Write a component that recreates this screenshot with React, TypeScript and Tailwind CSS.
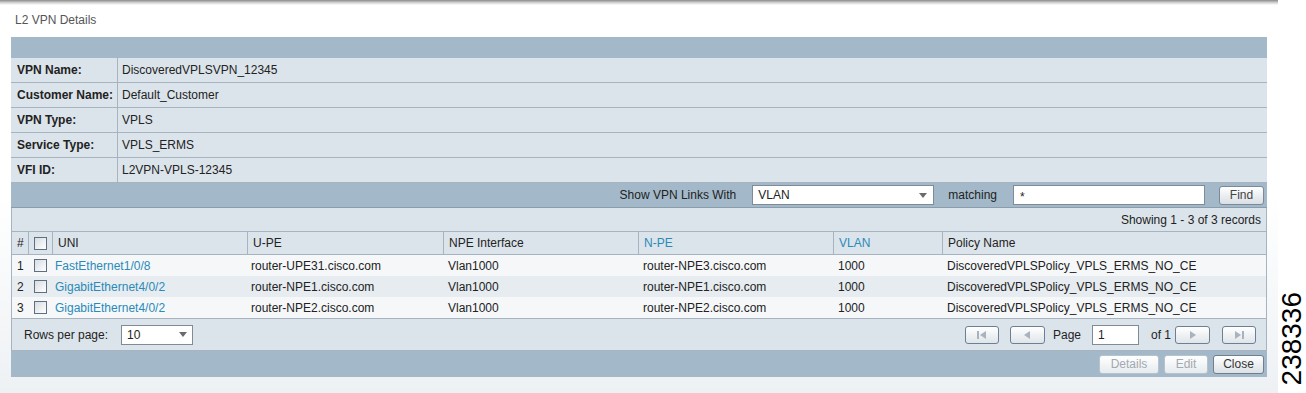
import React from "react";

const detailRows: [string, string][] = [
  ["VPN Name:", "DiscoveredVPLSVPN_12345"],
  ["Customer Name:", "Default_Customer"],
  ["VPN Type:", "VPLS"],
  ["Service Type:", "VPLS_ERMS"],
  ["VFI ID:", "L2VPN-VPLS-12345"],
];

const dataRows = [
  ["1", "FastEthernet1/0/8", "router-UPE31.cisco.com", "Vlan1000", "router-NPE3.cisco.com", "1000", "DiscoveredVPLSPolicy_VPLS_ERMS_NO_CE"],
  ["2", "GigabitEthernet4/0/2", "router-NPE1.cisco.com", "Vlan1000", "router-NPE1.cisco.com", "1000", "DiscoveredVPLSPolicy_VPLS_ERMS_NO_CE"],
  ["3", "GigabitEthernet4/0/2", "router-NPE2.cisco.com", "Vlan1000", "router-NPE2.cisco.com", "1000", "DiscoveredVPLSPolicy_VPLS_ERMS_NO_CE"],
];

function Checkbox() {
  return (
    <span className="inline-block w-[13px] h-[13px] border border-[#5e6f7f] bg-gradient-to-br from-[#d8dde2] to-white" />
  );
}

function Arrow({ dir }: { dir: "left" | "right" }) {
  return (
    <svg width="6" height="8" viewBox="0 0 6 8">
      {dir === "left" ? <polygon points="6,0 0,4 6,8" fill="#a9b3bd" /> : <polygon points="0,0 6,4 0,8" fill="#a9b3bd" />}
    </svg>
  );
}

function PagerBtn({ kind }: { kind: "first" | "prev" | "next" | "last" }) {
  const w = kind === "prev" || kind === "next" ? "w-[35px]" : "w-[34px]";
  return (
    <div className={`${w} h-[18px] rounded-[3px] border border-[#6d7f90] bg-gradient-to-b from-white to-[#dfe5ea] flex items-center justify-center gap-[1px]`}>
      {kind === "first" && <span className="w-[2px] h-[8px] bg-[#a9b3bd]" />}
      {(kind === "first" || kind === "prev") && <Arrow dir="left" />}
      {(kind === "next" || kind === "last") && <Arrow dir="right" />}
      {kind === "last" && <span className="w-[2px] h-[8px] bg-[#a9b3bd]" />}
    </div>
  );
}

function Caret() {
  return (
    <svg width="8" height="5" viewBox="0 0 8 5">
      <polygon points="0,0 8,0 4,5" fill="#6b6b6b" />
    </svg>
  );
}

export default function App() {
  const cell = "px-[5px] flex items-center";
  return (
    <div
      className="w-[1306px] h-[393px] bg-white flex text-[12px] text-[#222] overflow-hidden"
      style={{ fontFamily: '"Liberation Sans", Arial, sans-serif' }}
    >
      <div className="w-[1280px] flex flex-col bg-gradient-to-b from-white via-white to-[#eef1f4]">
        <div className="h-[5px] bg-gradient-to-b from-[#8a8a8a] via-[#cfcfcf] to-white" />
        <div className="h-[32px] pl-[15px] pt-[6px] text-[#555]">L2 VPN Details</div>
        <div className="ml-[11px] w-[1256px] flex flex-col">
          <div className="h-[21px] bg-[#a3b9c9]" />
          {detailRows.map(([k, v]) => (
            <div key={k} className="h-[25px] flex bg-[#dce4eb] border-b border-[#a7b4bf]">
              <div className="w-[107px] pl-[6px] flex items-center font-bold border-r border-[#a7b4bf]">{k}</div>
              <div className="pl-[4px] flex items-center">{v}</div>
            </div>
          ))}
          <div className="h-[25px] bg-[#a3b9c9] flex items-center justify-end pr-[3px] border-b border-[#8a9dab]">
            <span className="mr-[16px]">Show VPN Links With</span>
            <div className="w-[182px] h-[20px] bg-white border border-[#7f8c97] flex items-center justify-between pl-[5px] pr-[6px]">
              <span>VLAN</span>
              <Caret />
            </div>
            <span className="ml-[14px] mr-[16px]">matching</span>
            <div className="w-[192px] h-[20px] bg-white border border-[#7f8c97] pl-[6px] flex items-start pt-[2px]">*</div>
            <div className="ml-[14px] w-[45px] h-[19px] rounded-[3px] border border-[#7a8a98] bg-gradient-to-b from-white to-[#d9dfe4] flex items-center justify-center text-[#444]">
              Find
            </div>
          </div>
          <div className="h-[23px] bg-[#dce4eb] flex items-center justify-end pr-[5px] border-x border-[#a7b4bf]">
            Showing 1 - 3 of 3 records
          </div>
          <div className="flex flex-col border-x border-[#a7b4bf]">
            <div className="h-[24px] flex bg-[#dce4eb] border-y border-[#a7b4bf]">
              <div className={`w-[16px] ${cell} px-[3px]`}>#</div>
              <div className="w-[24px] border-l border-[#a7b4bf] flex items-center justify-center"><Checkbox /></div>
              <div className={`w-[195px] border-l border-[#a7b4bf] ${cell}`}>UNI</div>
              <div className={`w-[196px] border-l border-[#a7b4bf] ${cell}`}>U-PE</div>
              <div className={`w-[195px] border-l border-[#a7b4bf] ${cell}`}>NPE Interface</div>
              <div className={`w-[195px] border-l border-[#a7b4bf] ${cell} text-[#2a8ab8]`}>N-PE</div>
              <div className={`w-[109px] border-l border-[#a7b4bf] ${cell} text-[#2a8ab8]`}>VLAN</div>
              <div className={`flex-1 border-l border-[#a7b4bf] ${cell}`}>Policy Name</div>
            </div>
            {dataRows.map((r, i) => (
              <div key={i} className={`h-[21px] flex ${i === 1 ? "bg-[#e7ecf0]" : "bg-[#f5f7f9]"}`}>
                <div className={`w-[16px] ${cell} px-[3px]`}>{r[0]}</div>
                <div className="w-[24px] pl-[1px] flex items-center justify-center"><Checkbox /></div>
                <div className={`w-[195px] ${cell} pl-[3px] text-[#2a8ab8]`}>{r[1]}</div>
                <div className={`w-[196px] ${cell} pl-[4px]`}>{r[2]}</div>
                <div className={`w-[195px] ${cell}`}>{r[3]}</div>
                <div className={`w-[195px] ${cell}`}>{r[4]}</div>
                <div className={`w-[109px] ${cell}`}>{r[5]}</div>
                <div className={`flex-1 ${cell}`}>{r[6]}</div>
              </div>
            ))}
          </div>
          <div className="h-[33px] bg-[#dce4eb] border border-[#a7b4bf] flex items-center pl-[12px] pr-[10px]">
            <span>Rows per page:</span>
            <div className="ml-[13px] w-[72px] h-[20px] bg-white border border-[#7f8c97] flex items-center justify-between pl-[5px] pr-[5px]">
              <span>10</span>
              <Caret />
            </div>
            <div className="flex-1" />
            <PagerBtn kind="first" />
            <div className="w-[11px]" />
            <PagerBtn kind="prev" />
            <span className="ml-[8px] mr-[11px]">Page</span>
            <div className="w-[47px] h-[20px] bg-white border border-[#7f8c97] pl-[5px] flex items-center">1</div>
            <span className="ml-[12px] mr-[4px]">of 1</span>
            <PagerBtn kind="next" />
            <div className="w-[12px]" />
            <PagerBtn kind="last" />
          </div>
          <div className="h-[26px] bg-[#a3b9c9] flex items-center justify-end pr-[3px] gap-[5px]">
            <div className="w-[60px] h-[19px] rounded-[3px] border border-[#b7c3cc] bg-gradient-to-b from-white to-[#e6ebef] flex items-center justify-center text-[#a3a9ae]">Details</div>
            <div className="w-[44px] h-[19px] rounded-[3px] border border-[#b7c3cc] bg-gradient-to-b from-white to-[#e6ebef] flex items-center justify-center text-[#a3a9ae]">Edit</div>
            <div className="w-[51px] h-[19px] rounded-[3px] border border-[#6f7f8d] bg-gradient-to-b from-white to-[#dbe1e6] flex items-center justify-center text-[#333]">Close</div>
          </div>
        </div>
      </div>
      <div className="flex-1 flex items-end justify-center pb-[8px]">
        <div className="text-[28px] leading-none text-black [writing-mode:vertical-rl] rotate-180">238336</div>
      </div>
    </div>
  );
}
